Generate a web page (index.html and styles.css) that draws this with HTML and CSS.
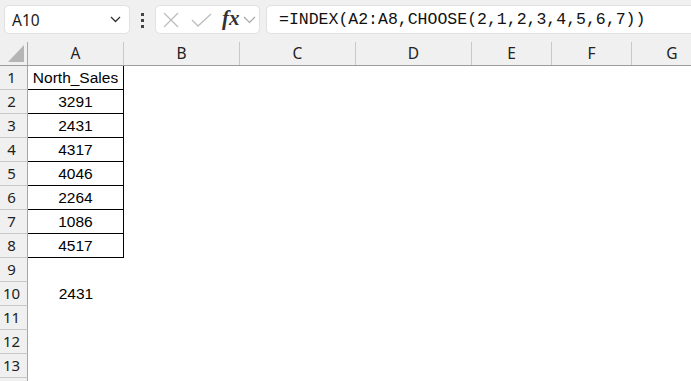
FILE: index.html
```html
<html>
	<head>
		<meta charset="utf-8">
		<title>Book1 - Excel</title>
		<link rel="stylesheet" href="styles.css">
	</head>
	<body>
		<div class="toolbar">
			<div class="namebox">
				<span class="namebox-text">A10</span>
				<svg class="chevron" width="11" height="7" viewBox="0 0 11 7"><path d="M1 1 L5.5 5.5 L10 1" fill="none" stroke="#333" stroke-width="1.3"/></svg>
			</div>
			<div class="dots"><span></span><span></span><span></span></div>
			<div class="fxbox">
				<svg class="icon-x" width="16" height="16" viewBox="0 0 16 16"><path d="M1 1 L15 15 M15 1 L1 15" stroke="#bdbdbd" stroke-width="1.3"/></svg>
				<svg class="icon-check" width="21" height="14" viewBox="0 0 21 14"><path d="M1 7 L7 13 L20 1" fill="none" stroke="#bdbdbd" stroke-width="1.3"/></svg>
				<span class="fx">fx</span>
				<svg class="chevron-small" width="13" height="8" viewBox="0 0 13 8"><path d="M1 1 L6.5 6.5 L12 1" fill="none" stroke="#a8a8a8" stroke-width="1.2"/></svg>
			</div>
			<div class="formula">=INDEX(A2:A8,CHOOSE(2,1,2,3,4,5,6,7))</div>
		</div>
		<div class="sheet" id="sheet">
			<div class="row head">
				<div class="rowhead corner"><div class="corner-tri"></div></div>
				<div class="colhead c-a">A</div>
				<div class="colhead c-b">B</div>
				<div class="colhead c-c">C</div>
				<div class="colhead c-d">D</div>
				<div class="colhead c-e">E</div>
				<div class="colhead c-f">F</div>
				<div class="colhead c-g">G</div>
			</div>
		</div>
		<script>
			const data={1:"North_Sales",2:"3291",3:"2431",4:"4317",5:"4046",6:"2264",7:"1086",8:"4517",10:"2431"};
			const cols=["c-b","c-c","c-d","c-e","c-f","c-g"];
			let html="";
			for(let i=1;i<=14;i++)
			{
				let boxed=(i<=8)?" boxed":"";
				// row 14 only peeks in at the bottom edge
				let num=(i<14)?i:"";
				html+=`<div class="row"><div class="rowhead">${num}</div><div class="cell c-a${boxed}">${data[i]||""}</div>`;
				for(let c of cols)
				{
					html+=`<div class="cell ${c}"></div>`;
				}
				html+=`</div>`;
			}
			document.getElementById('sheet').innerHTML+=html;
		</script>
	</body>
</html>
```

FILE: styles.css
```css
* {
  margin: 0;
  padding: 0;
  box-sizing: border-box;
}

body {
  background-color: #fff;
  font-family: "Liberation Sans", Arial, sans-serif;
  color: #000;
  overflow: hidden;
  width: 691px;
  height: 381px;
}

.toolbar {
  height: 42px;
  background-color: #f0f0f0;
  display: flex;
  align-items: flex-start;
  padding: 5px 0 0 4px;
  overflow: hidden;
}

.toolbar > * {
  flex: none;
}

.namebox {
  width: 126px;
  height: 29px;
  background-color: #fff;
  border: 1px solid #e1e1e1;
  border-radius: 5px;
  display: flex;
  align-items: center;
  justify-content: space-between;
  padding: 0 8px 0 7px;
}

.namebox-text {
  font-family: "Noto Sans", sans-serif;
  font-size: 15.5px;
  color: #1a1a1a;
}

.dots {
  width: 4px;
  margin: 8px 10px 0 11px;
  display: flex;
  flex-direction: column;
  gap: 3px;
}

.dots span {
  display: block;
  width: 3px;
  height: 3px;
  background-color: #444;
}

.fxbox {
  width: 105px;
  height: 29px;
  background-color: #fff;
  border: 1px solid #e1e1e1;
  border-radius: 5px;
  display: flex;
  align-items: center;
  padding-left: 7px;
}

.icon-check {
  margin-left: 12px;
}

.fx {
  font-family: "Liberation Serif", "DejaVu Serif", serif;
  font-style: italic;
  font-weight: bold;
  font-size: 21px;
  color: #333;
  margin-left: 10px;
  margin-top: -3px;
}

.chevron-small {
  margin-left: 3px;
}

.formula {
  width: 440px;
  height: 29px;
  margin-left: 6px;
  background-color: #fff;
  border: 1px solid #e1e1e1;
  border-radius: 5px;
  font-family: "Liberation Mono", "DejaVu Sans Mono", monospace;
  font-size: 16.5px;
  line-height: 27px;
  padding-left: 12px;
  color: #111;
  white-space: nowrap;
}

.row {
  display: flex;
  height: 24px;
}

.row.head {
  background-color: #f0f0f0;
  border-bottom: 1px solid #9c9c9c;
}

.rowhead {
  width: 28px;
  flex: none;
  background-color: #f0f0f0;
  border-right: 1px solid #a8a8a8;
  border-bottom: 1px solid #c9c9c9;
  font-family: "Noto Sans", sans-serif;
  font-size: 15px;
  color: #222;
  line-height: 23px;
  text-align: center;
  padding-right: 4px;
}

.corner {
  border-bottom: none;
  position: relative;
}

.corner-tri {
  position: absolute;
  left: 8px;
  top: 3px;
  width: 16px;
  height: 17px;
  background-color: #b5b5b5;
  clip-path: polygon(100% 0, 100% 100%, 0 100%);
}

.colhead {
  flex: none;
  font-family: "Noto Sans", sans-serif;
  font-size: 15.5px;
  color: #222;
  text-align: center;
  line-height: 23px;
  border-right: 1px solid #c9c9c9;
}

.colhead.c-g {
  border-right: none;
}

.cell {
  flex: none;
  font-size: 15.5px;
  line-height: 24px;
  text-align: center;
}

.c-a { width: 96px; }
.c-b { width: 116px; }
.c-c { width: 116px; }
.c-d { width: 116px; }
.c-e { width: 80px; }
.c-f { width: 80px; }
.c-g { width: 80px; }

.cell.boxed {
  border-right: 1px solid #000;
  border-bottom: 1px solid #000;
  line-height: 23px;
}
```
